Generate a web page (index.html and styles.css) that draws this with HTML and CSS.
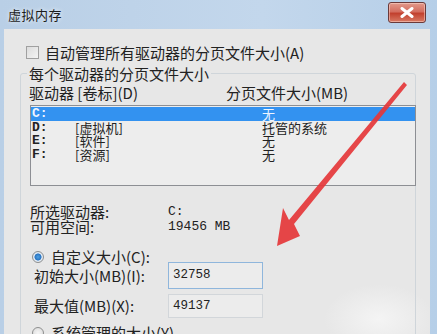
FILE: index.html
```html
<!DOCTYPE html>
<html lang="zh-CN">
<head>
    <meta charset="UTF-8">
    <meta name="viewport" content="width=device-width, initial-scale=1.0">
    <title>虚拟内存</title>
    <link rel="stylesheet" href="styles.css">
</head>
<body>
    <div class="window">
        <!-- Title bar -->
        <div class="titlebar">
            <span class="title">虚拟内存</span>
            <span class="close">
                <svg width="14" height="11" viewBox="0 0 14 11">
                    <path d="M2 1.5 L12 9.5 M12 1.5 L2 9.5" stroke="#fff" stroke-width="3" stroke-linecap="round"/>
                </svg>
            </span>
        </div>

        <!-- Dialog body -->
        <div class="panel">
            <div class="check-row">
                <span class="checkbox"></span>
                <span>自动管理所有驱动器的分页文件大小(A)</span>
            </div>

            <fieldset class="group">
                <legend>每个驱动器的分页文件大小</legend>
                <div class="list-head">
                    <span class="col-drive">驱动器 [卷标](D)</span>
                    <span>分页文件大小(MB)</span>
                </div>
                <div class="listbox">
                    <div class="row selected"><span class="c1">C:</span><span class="c2"></span><span>无</span></div>
                    <div class="row"><span class="c1">D:</span><span class="c2">[虚拟机]</span><span>托管的系统</span></div>
                    <div class="row"><span class="c1">E:</span><span class="c2">[软件]</span><span>无</span></div>
                    <div class="row"><span class="c1">F:</span><span class="c2">[资源]</span><span>无</span></div>
                </div>

                <div class="info">
                    <div class="info-row"><span class="info-label">所选驱动器:</span><span class="mono">C:</span></div>
                    <div class="info-row"><span class="info-label">可用空间:</span><span class="mono">19456 MB</span></div>
                </div>

                <div class="radio-row">
                    <span class="radio checked"></span>
                    <span>自定义大小(C):</span>
                </div>
                <div class="field-row first">
                    <span class="field-label">初始大小(MB)(I):</span>
                    <span class="input focus">32758</span>
                </div>
                <div class="field-row">
                    <span class="field-label">最大值(MB)(X):</span>
                    <span class="input">49137</span>
                </div>
                <div class="radio-row last">
                    <span class="radio"></span>
                    <span>系统管理的大小(Y)</span>
                </div>
            </fieldset>
        </div>

        <!-- red annotation arrow -->
        <svg class="arrow" width="437" height="334" viewBox="0 0 437 334">
            <polygon points="404,82 407,85 294,224 300,236 277,246 283,208 289,220" fill="#e5373a" opacity="0.92"/>
        </svg>
    </div>
</body>
</html>
```

FILE: styles.css
```css
body {
    margin: 0;
    padding: 0;
    font-family: "Noto Sans CJK SC", sans-serif;
    color: #222;
}

.window {
    position: relative;
    width: 437px;
    height: 334px;
    overflow: hidden;
    background: linear-gradient(90deg, #b9cfe6 0%, #c3d7ec 60%, #b6cfe8 100%);
    display: flex;
    flex-direction: column;
}

/* Title bar */
.titlebar {
    height: 29px;
    display: flex;
    align-items: center;
    justify-content: space-between;
    padding: 0 11px 0 8px;
    flex-shrink: 0;
}

.title {
    font-size: 13px;
    color: #1c1c1c;
    letter-spacing: 0.5px;
    text-shadow: 0 0 4px rgba(255, 255, 255, 0.9);
    margin-top: -1px;
}

.close {
    width: 36px;
    height: 19px;
    border: 1px solid #6a3a3a;
    border-radius: 3px;
    background: linear-gradient(#e29a8c 0%, #d46e60 45%, #c2412f 55%, #d87a64 100%);
    display: flex;
    align-items: center;
    justify-content: center;
    margin-top: -4px;
    box-shadow: inset 0 0 0 1px rgba(255, 220, 210, 0.5);
}

/* Dialog body */
.panel {
    flex: 1;
    margin: 0 7px 0 4px;
    background: radial-gradient(ellipse 55px 35px at 375px 290px, #f4f4f4 0%, rgba(236, 236, 236, 0) 100%), #e7e7e7;
    padding-top: 15px;
}

.check-row {
    display: flex;
    align-items: center;
    gap: 6px;
    padding-left: 22px;
    font-size: 15px;
    line-height: 17px;
}

.checkbox {
    width: 11px;
    height: 11px;
    border: 1px solid #a0a0a0;
    background: linear-gradient(135deg, #dcdcdc, #f4f4f4);
}

.group {
    margin: 5px 14px 0 16px;
    padding: 4px 0 0 8px;
    border: 1px solid #cfd5da;
    border-radius: 3px;
    font-size: 15px;
}

.group legend {
    padding: 0 2px;
    margin-left: -2px;
    line-height: 15px;
}

.list-head {
    display: flex;
    line-height: 15px;
}

.col-drive {
    width: 197px;
}

.listbox {
    margin: 5px -1px 0 1px;
    height: 78px;
    border: 1px solid #8d8f94;
    background: #ededed;
    padding-top: 1px;
}

.row {
    display: flex;
    height: 13.5px;
    line-height: 13.5px;
    font-size: 13px;
    padding-left: 1px;
}

.row.selected {
    background: #3392f0;
    color: #eef5ff;
}

.c1 {
    width: 43px;
    font-family: "Liberation Mono", monospace;
    font-size: 13px;
    font-weight: bold;
}

.c2 {
    width: 187px;
}

.info {
    margin: 18px 0 0 1px;
}

.info-row {
    display: flex;
    line-height: 15px;
}

.info-label {
    width: 138px;
}

.mono {
    font-family: "Liberation Mono", monospace;
    font-size: 13px;
}

.radio-row {
    display: flex;
    align-items: center;
    gap: 7px;
    margin: 15px 0 0 3px;
    line-height: 16px;
}

.radio-row.last {
    margin-top: 7px;
}

.radio {
    width: 10px;
    height: 10px;
    border: 1px solid #8e8f8f;
    border-radius: 50%;
    background: radial-gradient(circle, #f6f6f6, #d8d8d8);
}

.radio.checked {
    background: radial-gradient(circle, #4da0e0 0%, #2a74c2 45%, #e6eef6 55%, #d0d8e0 100%);
}

.field-row {
    display: flex;
    align-items: center;
    margin: 5px 0 0 5px;
}

.field-row.first {
    margin-top: -3px;
}

.field-label {
    width: 134px;
    line-height: 16px;
}

.input {
    width: 89px;
    height: 22px;
    line-height: 22px;
    padding-left: 4px;
    border: 1px solid #d2d6da;
    background: #ececec;
    font-family: "Liberation Mono", monospace;
    font-size: 12.5px;
}

.input.focus {
    height: 25px;
    line-height: 25px;
    border-color: #8fb6dc;
}

/* annotation drawn over the dialog */
.arrow {
    position: absolute;
    left: 0;
    top: 0;
}
```
